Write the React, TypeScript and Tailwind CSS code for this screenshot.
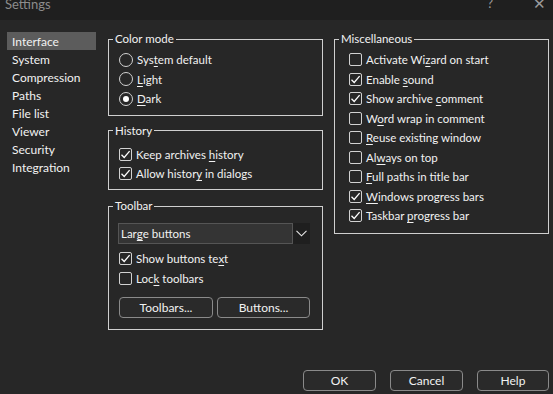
import type { ReactNode } from 'react';

const FONT = "font-['Lato',_'Noto_Sans',_sans-serif]";

function Mn({ before, key_, after }: { before: string; key_: string; after: string }) {
  return (
    <span>
      {before}
      <span className="underline underline-offset-[2px]">{key_}</span>
      {after}
    </span>
  );
}

function CheckBox({ checked }: { checked: boolean }) {
  return (
    <span className="w-[13px] h-[13px] shrink-0 rounded-[2px] border border-[#d2d2d2] flex items-center justify-center">
      {checked && (
        <svg width="11" height="11" viewBox="0 0 11 11">
          <path d="M1.5 5.8 L4.2 8.5 L9.6 2.2" fill="none" stroke="#ffffff" strokeWidth="1.3" />
        </svg>
      )}
    </span>
  );
}

function Radio({ checked }: { checked: boolean }) {
  return (
    <span className="w-[14px] h-[14px] shrink-0 rounded-full border border-[#d2d2d2] flex items-center justify-center">
      {checked && <span className="w-[6px] h-[6px] rounded-full bg-white" />}
    </span>
  );
}

function Row({ children, control, indent = 'ml-[10px]' }: { children: ReactNode; control: ReactNode; indent?: string }) {
  return (
    <div className={`h-[19.5px] flex items-center gap-[4px] ${indent}`}>
      {control}
      <span className="text-[11.5px] leading-[16px] pt-[1px]">{children}</span>
    </div>
  );
}

function Group({ title, children, className = '' }: { title: string; children: ReactNode; className?: string }) {
  return (
    <fieldset className={`border border-[#cfcfcf] ${className}`}>
      <legend className="ml-[4px] px-[2px] text-[11.5px] leading-[16px]">{title}</legend>
      {children}
    </fieldset>
  );
}

function Btn({ children, className = '' }: { children: ReactNode; className?: string }) {
  return (
    <div className={`h-[21px] rounded-[4px] border border-[#8a8a8a] bg-[#2a2a2a] flex items-center justify-center leading-[16px] pt-[1px] ${className}`}>
      {children}
    </div>
  );
}

const nav = ['Interface', 'System', 'Compression', 'Paths', 'File list', 'Viewer', 'Security', 'Integration'];

export default function App() {
  return (
    <div className={`w-[553px] h-[394px] bg-[#272727] text-[#f2f2f2] text-[12px] flex flex-col overflow-hidden ${FONT}`}>
      <div className="h-[20px] shrink-0 bg-[#1f1f1f] flex items-start justify-between">
        <span className="ml-[5px] -mt-[4px] text-[13px] text-[#8c8c8c] leading-[16px]">Settings</span>
        <div className="flex items-start -mt-[5px] text-[#9a9a9a] text-[13px] leading-[16px]">
          <span className="mr-[40px]">?</span>
          <span className="mr-[7px] text-[15px]">✕</span>
        </div>
      </div>

      <div className="flex">
        <div className="ml-[7px] mt-[12px] w-[89px]">
          {nav.map((n, i) => (
            <div key={n} className={`h-[18px] pl-[5px] pt-[1px] flex items-center leading-[16px] ${i === 0 ? 'bg-[#5c5c5c]' : ''}`}>
              {n}
            </div>
          ))}
        </div>

        <div className="ml-[12px] mt-[11px] w-[215px] flex flex-col">
          <Group title="Color mode" className="pt-[3px] pb-[6px]">
            <Row control={<Radio checked={false} />}>
              <Mn before="Sys" key_="t" after="em default" />
            </Row>
            <Row control={<Radio checked={false} />}>
              <Mn before="" key_="L" after="ight" />
            </Row>
            <Row control={<Radio checked />}>
              <Mn before="" key_="D" after="ark" />
            </Row>
          </Group>

          <Group title="History" className="mt-[7px] pt-[6px] pb-[5.5px]">
            <Row control={<CheckBox checked />}>
              <Mn before="Keep archives " key_="h" after="istory" />
            </Row>
            <Row control={<CheckBox checked />}>
              <Mn before="Allow histor" key_="y" after=" in dialogs" />
            </Row>
          </Group>

          <Group title="Toolbar" className="mt-[8px] pb-[11px]">
            <div className="mt-[9px] ml-[9px] w-[192px] h-[21px] flex">
              <div className="flex-1 bg-[#343434] border border-[#555555] flex items-center pl-[2px] pt-[1px] text-[11.5px] leading-[16px]">
                Lar<span className="underline underline-offset-[2px]">g</span>e buttons
              </div>
              <div className="w-[17px] bg-[#1f1f1f] flex items-center justify-center">
                <svg width="11" height="7" viewBox="0 0 11 7">
                  <path d="M0.5 0.8 L5.5 5.8 L10.5 0.8" fill="none" stroke="#e8e8e8" strokeWidth="1.1" />
                </svg>
              </div>
            </div>
            <div className="mt-[5px]">
              <Row control={<CheckBox checked />}>
                <Mn before="Show buttons te" key_="x" after="t" />
              </Row>
              <Row control={<CheckBox checked={false} />}>
                <Mn before="Loc" key_="k" after=" toolbars" />
              </Row>
            </div>
            <div className="mt-[8.5px] ml-[10px] flex gap-[4px]">
              <Btn className="w-[94px]">Toolbars...</Btn>
              <Btn className="w-[93px]">Buttons...</Btn>
            </div>
          </Group>
        </div>

        <div className="ml-[11px] mt-[11px] w-[215px]">
          <Group title="Miscellaneous" className="pt-[3px] pb-[7.5px]">
            <Row indent="ml-[14px]" control={<CheckBox checked={false} />}>
              <Mn before="Activate Wi" key_="z" after="ard on start" />
            </Row>
            <Row indent="ml-[14px]" control={<CheckBox checked />}>
              <Mn before="Enable " key_="s" after="ound" />
            </Row>
            <Row indent="ml-[14px]" control={<CheckBox checked />}>
              <Mn before="Show archive " key_="c" after="omment" />
            </Row>
            <Row indent="ml-[14px]" control={<CheckBox checked={false} />}>
              <Mn before="W" key_="o" after="rd wrap in comment" />
            </Row>
            <Row indent="ml-[14px]" control={<CheckBox checked={false} />}>
              <Mn before="" key_="R" after="euse existing window" />
            </Row>
            <Row indent="ml-[14px]" control={<CheckBox checked={false} />}>
              <Mn before="Al" key_="w" after="ays on top" />
            </Row>
            <Row indent="ml-[14px]" control={<CheckBox checked={false} />}>
              <Mn before="" key_="F" after="ull paths in title bar" />
            </Row>
            <Row indent="ml-[14px]" control={<CheckBox checked />}>
              <Mn before="" key_="W" after="indows progress bars" />
            </Row>
            <Row indent="ml-[14px]" control={<CheckBox checked />}>
              <Mn before="Taskbar " key_="p" after="rogress bar" />
            </Row>
          </Group>
        </div>
      </div>

      <div className="mt-auto mb-[3px] mr-[4px] flex justify-end gap-[14px]">
        <Btn className="w-[73px]">OK</Btn>
        <Btn className="w-[73px]">Cancel</Btn>
        <Btn className="w-[72px]">Help</Btn>
      </div>
    </div>
  );
}
